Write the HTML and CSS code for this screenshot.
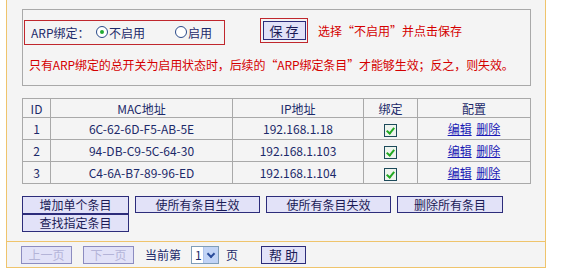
FILE: index.html
```html
<!DOCTYPE html>
<html lang="zh-CN">
<head>
    <meta charset="UTF-8">
    <title>静态ARP绑定设置</title>
    <link rel="stylesheet" href="styles.css">
</head>
<body>
    <div class="panel">
        <div class="content">
            <div class="settings">
                <div class="settings-row">
                    <div class="switch-box">
                        <span class="label">ARP绑定：</span>
                        <span class="radio checked"></span><span class="opt">不启用</span>
                        <span class="radio"></span><span class="opt">启用</span>
                    </div>
                    <div class="save-box"><button class="btn save">保 存</button></div>
                    <span class="hint">选择“不启用”并点击保存</span>
                </div>
                <p class="note">只有ARP绑定的总开关为启用状态时，后续的“ARP绑定条目”才能够生效；反之，则失效。</p>
            </div>

            <table class="entries">
                <tr>
                    <th class="c-id">ID</th>
                    <th class="c-mac">MAC地址</th>
                    <th class="c-ip">IP地址</th>
                    <th class="c-bind">绑定</th>
                    <th>配置</th>
                </tr>
                <tr>
                    <td>1</td><td>6C-62-6D-F5-AB-5E</td><td>192.168.1.18</td>
                    <td><span class="check"></span></td>
                    <td><a href="#">编辑</a> <a href="#">删除</a></td>
                </tr>
                <tr>
                    <td>2</td><td>94-DB-C9-5C-64-30</td><td>192.168.1.103</td>
                    <td><span class="check"></span></td>
                    <td><a href="#">编辑</a> <a href="#">删除</a></td>
                </tr>
                <tr>
                    <td>3</td><td>C4-6A-B7-89-96-ED</td><td>192.168.1.104</td>
                    <td><span class="check"></span></td>
                    <td><a href="#">编辑</a> <a href="#">删除</a></td>
                </tr>
            </table>

            <div class="actions">
                <button class="btn w-add">增加单个条目</button>
                <button class="btn w-all">使所有条目生效</button>
                <button class="btn w-all">使所有条目失效</button>
                <button class="btn w-del">删除所有条目</button>
            </div>
            <div class="actions second">
                <button class="btn w-add">查找指定条目</button>
            </div>
        </div>

        <div class="pager">
            <button class="btn page" disabled>上一页</button>
            <button class="btn page" disabled>下一页</button>
            <span class="cur">当前第</span>
            <span class="select"><span class="val">1</span><span class="arrow"></span></span>
            <span class="cur">页</span>
            <button class="btn help">帮 助</button>
        </div>
    </div>
</body>
</html>
```

FILE: styles.css
```css
body {
    margin: 0;
    background: #fff;
    font-family: "Noto Sans CJK SC", "DejaVu Sans", sans-serif;
    font-size: 12px;
    color: #1c2a6a;
}

.panel {
    margin-left: 6px;
    width: 538px;
    background: #f4f4f4;
    border: 1px solid #efc46c;
    border-top: none;
}

.content {
    padding: 9px 14px 9px 15px;
}

/* top settings box */
.settings {
    border: 1px solid #a9a9a9;
    height: 77px;
    box-sizing: border-box;
    padding: 9px 0 0 1px;
}

.settings-row {
    display: flex;
    align-items: center;
    height: 26px;
    white-space: nowrap;
}

.switch-box {
    flex: none;
    width: 201px;
    height: 25px;
    box-sizing: border-box;
    border: 1px solid #c0272d;
    display: flex;
    align-items: center;
    padding-left: 6px;
    color: #1c2a6a;
}

.label {
    flex: none;
    width: 65px;
}

.radio {
    flex: none;
    width: 12px;
    height: 12px;
    border-radius: 50%;
    border: 1px solid #2a4a8a;
    background: #fff;
    box-sizing: border-box;
    position: relative;
    margin-right: 1px;
}

.radio.checked::after {
    content: "";
    position: absolute;
    left: 3px;
    top: 3px;
    width: 4px;
    height: 4px;
    border-radius: 50%;
    background: #22aa33;
}

.opt {
    flex: none;
    width: 66px;
}

.save-box {
    flex: none;
    margin-left: 35px;
    margin-top: -3px;
    width: 48px;
    height: 25px;
    box-sizing: border-box;
    border: 1px solid #c0272d;
    display: flex;
    align-items: center;
    justify-content: center;
}

.hint {
    margin-left: 10px;
    margin-top: -3px;
    color: #d40000;
}

.note {
    margin: 11px 0 0 5px;
    color: #d40000;
    white-space: nowrap;
    letter-spacing: -0.1px;
}

/* buttons */
.btn {
    font-family: inherit;
    font-size: 12px;
    color: #1a1a55;
    background: #e2e2f8;
    border: 1px solid #2c2c7a;
    padding: 0;
    height: 17px;
    line-height: 14px;
    cursor: pointer;
}

.save {
    width: 43px;
    height: 19px;
    font-size: 13px;
}

/* table */
.entries {
    margin-top: 12px;
    width: 509px;
    border-collapse: collapse;
}

.entries th,
.entries td {
    border: 1px solid #a9a9a9;
    text-align: center;
    font-weight: normal;
    padding: 0;
    height: 21px;
}

.entries th {
    height: 18px;
}

.c-id { width: 27px; }
.c-mac { width: 181px; }
.c-ip { width: 130px; }
.c-bind { width: 53px; }

.entries a {
    color: #1a1ab4;
    margin: 0 1px;
}

.check {
    display: inline-block;
    width: 11px;
    height: 11px;
    border: 1px solid #1c4a5a;
    background: #eef4ee;
    vertical-align: middle;
    position: relative;
}

.check::after {
    content: "";
    position: absolute;
    left: 3px;
    top: 1px;
    width: 3px;
    height: 6px;
    border: solid #22aa22;
    border-width: 0 2px 2px 0;
    transform: rotate(40deg);
}

.actions {
    display: flex;
    gap: 6px;
    margin-top: 12px;
}

.actions.second {
    margin-top: 0;
}

.w-add { width: 107px; height: 18px; }
.w-all { width: 125px; }
.w-del { width: 106px; }

/* pager */
.pager {
    border-top: 1px solid #efc46c;
    display: flex;
    align-items: center;
    height: 25px;
    padding-left: 14px;
}

.page {
    width: 51px;
    height: 18px;
    color: #b4b4d8;
    border-color: #8c8cc0;
    margin-right: 11px;
}

.cur {
    margin-right: 10px;
}

.select {
    display: inline-flex;
    width: 28px;
    height: 18px;
    box-sizing: border-box;
    border: 1px solid #7f9db9;
    background: #fff;
    margin-right: 7px;
}

.val {
    flex: 1;
    padding-left: 3px;
    line-height: 16px;
}

.arrow {
    width: 14px;
    background: #c2d4f6;
    border-left: 1px solid #b0c4ec;
    position: relative;
}

.arrow::after {
    content: "";
    position: absolute;
    left: 4px;
    top: 4px;
    width: 4px;
    height: 4px;
    border: solid #2a4c9a;
    border-width: 0 2px 2px 0;
    transform: rotate(45deg);
}

.help {
    width: 45px;
    height: 18px;
    margin-left: 13px;
    font-size: 13px;
}
```
